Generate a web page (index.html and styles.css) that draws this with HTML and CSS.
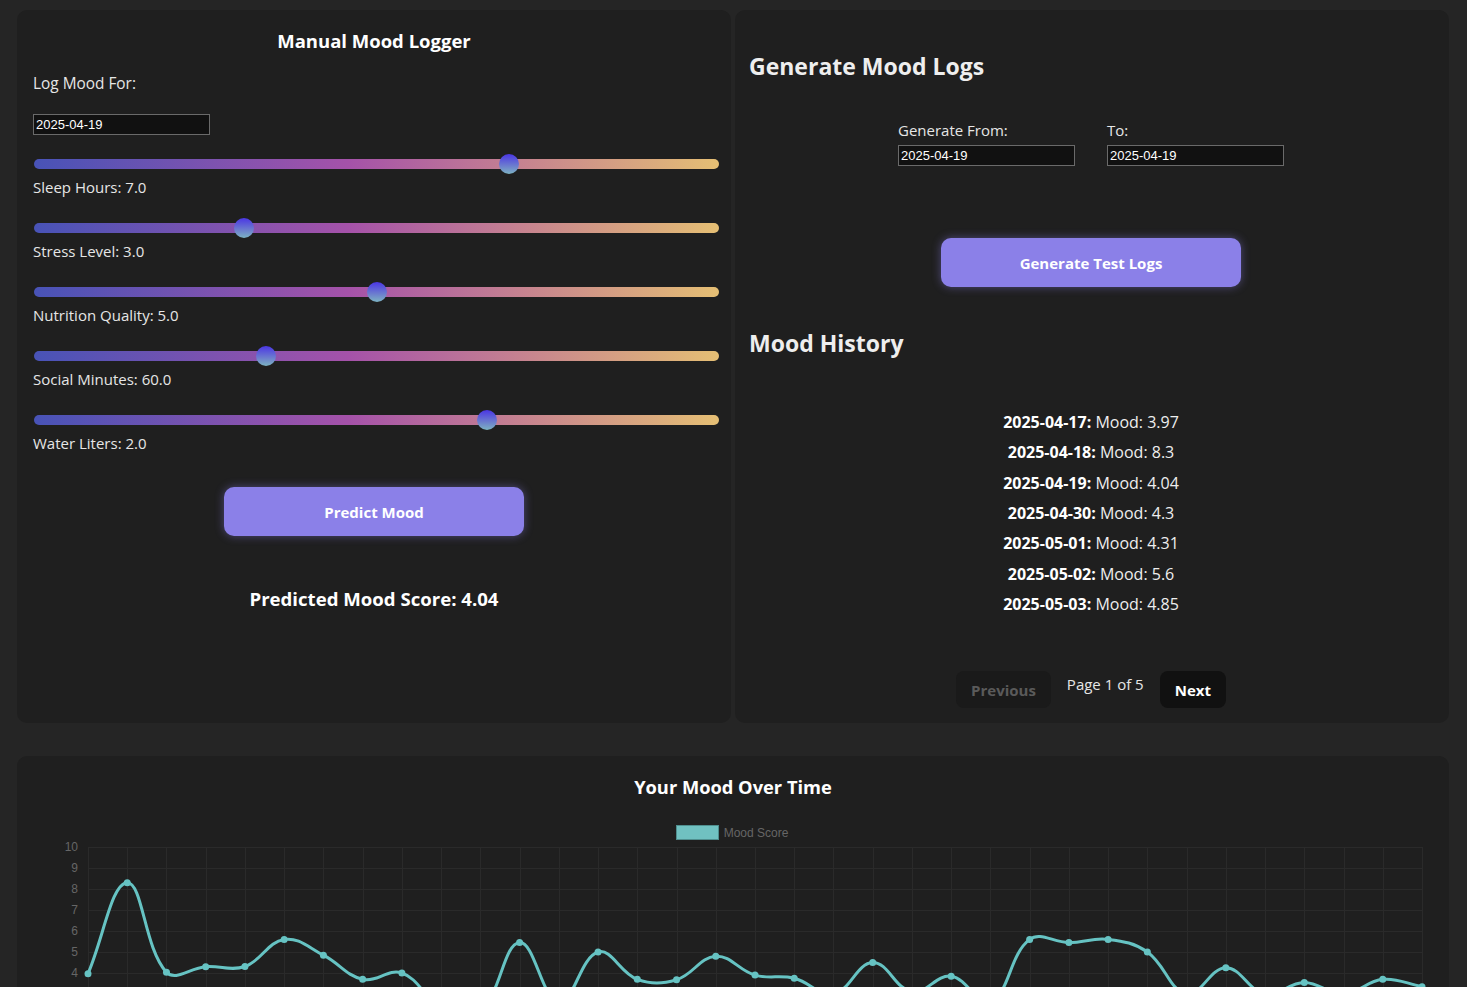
FILE: index.html
```html
<!DOCTYPE html>
<html lang="en">
<head>
<meta charset="utf-8">
<title>Mood Tracker</title>
<link rel="stylesheet" href="styles.css">
</head>
<body>
<div class="page">
  <div class="top-grid">
    <section class="card logger">
      <h3 class="card-title">Manual Mood Logger</h3>
      <label class="field-label">Log Mood For:</label>
      <input class="date-input" type="text" value="2025-04-19">
      <div class="sliders">
        <div class="slider-group">
          <input class="range" type="range" min="0" max="10" step="0.1" value="7">
          <div class="slider-label">Sleep Hours: 7.0</div>
        </div>
        <div class="slider-group">
          <input class="range" type="range" min="0" max="10" step="0.1" value="3">
          <div class="slider-label">Stress Level: 3.0</div>
        </div>
        <div class="slider-group">
          <input class="range" type="range" min="0" max="10" step="0.1" value="5">
          <div class="slider-label">Nutrition Quality: 5.0</div>
        </div>
        <div class="slider-group">
          <input class="range" type="range" min="0" max="180" step="1" value="60">
          <div class="slider-label">Social Minutes: 60.0</div>
        </div>
        <div class="slider-group">
          <input class="range" type="range" min="0" max="3" step="0.1" value="2">
          <div class="slider-label">Water Liters: 2.0</div>
        </div>
      </div>
      <div class="center-row">
        <button class="primary-btn predict-btn">Predict Mood</button>
      </div>
      <div class="predicted">Predicted Mood Score: 4.04</div>
    </section>

    <section class="card generator">
      <h2 class="section-title gen-title">Generate Mood Logs</h2>
      <div class="range-row">
        <div class="range-field">
          <label class="small-label">Generate From:</label>
          <input class="date-input" type="text" value="2025-04-19">
        </div>
        <div class="range-field">
          <label class="small-label">To:</label>
          <input class="date-input" type="text" value="2025-04-19">
        </div>
      </div>
      <div class="center-row">
        <button class="primary-btn generate-btn">Generate Test Logs</button>
      </div>
      <h2 class="section-title history-title">Mood History</h2>
      <ul class="history">
        <li><strong>2025-04-17:</strong> Mood: 3.97</li>
        <li><strong>2025-04-18:</strong> Mood: 8.3</li>
        <li><strong>2025-04-19:</strong> Mood: 4.04</li>
        <li><strong>2025-04-30:</strong> Mood: 4.3</li>
        <li><strong>2025-05-01:</strong> Mood: 4.31</li>
        <li><strong>2025-05-02:</strong> Mood: 5.6</li>
        <li><strong>2025-05-03:</strong> Mood: 4.85</li>
      </ul>
      <div class="pager">
        <button class="pager-btn disabled">Previous</button>
        <span class="pager-text">Page 1 of 5</span>
        <button class="pager-btn active">Next</button>
      </div>
    </section>
  </div>

  <section class="card chart-card">
    <h3 class="chart-title">Your Mood Over Time</h3>
    <div class="legend">
      <span class="legend-box"></span>
      <span class="legend-text">Mood Score</span>
    </div>
    <svg id="chart" class="chart-svg" width="1432" height="250" viewBox="0 0 1432 250"></svg>
  </section>
</div>
<script src="chart.js"></script>
</body>
</html>
```

FILE: styles.css
```css
* { box-sizing: border-box; }

html, body {
  margin: 0;
  padding: 0;
  background: #252525;
  color: #e6e6e6;
  font-family: "Open Sans", "Noto Sans", sans-serif;
}

.page {
  padding: 10px 18px 0 17px;
}

.top-grid {
  display: grid;
  grid-template-columns: minmax(0, 1fr) minmax(0, 1fr);
  gap: 4px;
}

.card {
  background: #1f1f1f;
  border-radius: 10px;
}

/* ---------- left card ---------- */
.logger {
  padding: 16px 16px 20px 16px;
  display: flex;
  flex-direction: column;
  min-width: 0;
}

.card-title {
  margin: 2px 0 0;
  text-align: center;
  font-size: 18.5px;
  line-height: 26px;
  font-weight: 700;
  color: #ffffff;
}

.field-label {
  display: block;
  margin-top: 19px;
  font-size: 15.4px;
  line-height: 21px;
  color: #e6e6e6;
}

.date-input {
  display: block;
  width: 177px;
  height: 21px;
  margin: 0;
  padding: 0 2px;
  background: #111111;
  border: 1px solid #6a6a6a;
  color: #ffffff;
  font-family: "Liberation Sans", Arial, sans-serif;
  font-size: 13px;
  outline: none;
}

.logger .date-input {
  margin-top: 20px;
}

.sliders {
  display: flex;
  flex-direction: column;
  gap: 19px;
  margin-top: 18px;
}

.slider-group {
  display: flex;
  flex-direction: column;
  gap: 3px;
}

.range {
  -webkit-appearance: none;
  appearance: none;
  display: block;
  width: calc(100% + 3px);
  height: 10px;
  margin: 6px 0 4px 1px;
  border-radius: 5px;
  background: linear-gradient(90deg, #4853b7 0%, #a552a9 46%, #c7848f 72%, #e5bf74 100%);
  outline: none;
}

.range::-webkit-slider-thumb {
  -webkit-appearance: none;
  appearance: none;
  width: 20px;
  height: 20px;
  border-radius: 50%;
  background: linear-gradient(180deg, #4a36e4 0%, #6a78d0 55%, #7cb3c2 100%);
  border: none;
  cursor: pointer;
}

.slider-label {
  font-size: 15px;
  line-height: 22px;
  color: #e6e6e6;
}

.center-row {
  display: flex;
  justify-content: center;
}

.primary-btn {
  width: 300px;
  height: 49px;
  border: none;
  border-radius: 10px;
  background: #8b80e8;
  color: #ffffff;
  font-family: "Open Sans", "Noto Sans", sans-serif;
  font-size: 15px;
  font-weight: 700;
  box-shadow: 0 0 10px rgba(139, 128, 232, 0.45);
  cursor: pointer;
}

.predict-btn {
  margin-top: 33px;
}

.predicted {
  margin-top: 51px;
  text-align: center;
  font-size: 18.6px;
  line-height: 24px;
  font-weight: 700;
  color: #ffffff;
}

/* ---------- right card ---------- */
.generator {
  padding: 0 16px 15px 14px;
  display: flex;
  flex-direction: column;
  min-width: 0;
}

.section-title {
  margin: 0;
  font-size: 23px;
  line-height: 32px;
  font-weight: 700;
  color: #eeeeee;
}

.gen-title { margin-top: 40px; }

.range-row {
  display: flex;
  justify-content: center;
  gap: 32px;
  margin-top: 38px;
}

.range-field {
  display: flex;
  flex-direction: column;
  gap: 5px;
}

.small-label {
  font-size: 15px;
  line-height: 20px;
  color: #e6e6e6;
}

.generate-btn {
  margin-top: 72px;
}

.history-title { margin-top: 40px; }

.history {
  list-style: none;
  margin: 48px 0 0;
  padding: 0;
  text-align: center;
  font-size: 16px;
  line-height: 30.33px;
  color: #eeeeee;
}

.history strong {
  font-weight: 700;
  color: #ffffff;
}

.pager {
  display: flex;
  justify-content: center;
  align-items: flex-start;
  gap: 16px;
  margin-top: 52px;
}

.pager-btn {
  height: 37px;
  padding: 0 15px;
  border: none;
  border-radius: 8px;
  font-family: "Open Sans", "Noto Sans", sans-serif;
  font-size: 15px;
  font-weight: 700;
}

.pager-btn.disabled {
  background: #1a1a1a;
  color: #5a5a5a;
}

.pager-btn.active {
  background: #111111;
  color: #ffffff;
}

.pager-text {
  padding-top: 2px;
  font-size: 15px;
  line-height: 22px;
  color: #e6e6e6;
}

/* ---------- chart card ---------- */
.chart-card {
  margin-top: 33px;
  padding-top: 19px;
  height: 300px;
  overflow: hidden;
}

.chart-title {
  margin: 0;
  text-align: center;
  font-size: 18.3px;
  line-height: 24px;
  font-weight: 700;
  color: #ffffff;
}

.legend {
  display: flex;
  justify-content: center;
  align-items: center;
  gap: 5px;
  margin-top: 26px;
  height: 15px;
  padding-right: 2px;
}

.legend-box {
  width: 43px;
  height: 15px;
  background: #70c1c1;
  border: 1px solid #4f8e8e;
}

.legend-text {
  font-family: "Liberation Sans", Arial, sans-serif;
  font-size: 12px;
  color: #666666;
}

.chart-svg {
  display: block;
  margin-top: -4px;
}

.grid-line {
  stroke: #2a2a2a;
  stroke-width: 1;
}

.axis-label {
  font-family: "Liberation Sans", Arial, sans-serif;
  font-size: 12px;
  fill: #666666;
}

.mood-line {
  fill: none;
  stroke: #66c3c3;
  stroke-width: 3;
}

.mood-point {
  fill: #66c3c3;
}
```

FILE: chart.js
```javascript
(function () {
  var svg = document.getElementById('chart');
  var NS = 'http://www.w3.org/2000/svg';
  var data = [3.97, 8.3, 4.04, 4.3, 4.31, 5.6, 4.85, 3.7, 4.0, 2.4, 2.2, 5.45, 2.6, 5.0, 3.7, 3.68,
    4.8, 3.9, 3.75, 3.0, 4.5, 3.1, 3.85, 2.6, 5.6, 5.45, 5.6, 5.0, 3.0, 4.25, 3.0, 3.55, 3.0, 3.7, 3.35];
  var left = 71, right = 1405, top = 11, unit = 21;
  var step = (right - left) / (data.length - 1);

  function el(name, attrs) {
    var e = document.createElementNS(NS, name);
    for (var k in attrs) e.setAttribute(k, attrs[k]);
    svg.appendChild(e);
    return e;
  }
  function yOf(v) { return top + (10 - v) * unit; }

  for (var v = 0; v <= 10; v++) {
    el('line', { x1: left, x2: right, y1: yOf(v) + 0.5, y2: yOf(v) + 0.5, 'class': 'grid-line' });
    if (v >= 4) {
      var t = el('text', { x: left - 10, y: yOf(v) + 4, 'text-anchor': 'end', 'class': 'axis-label' });
      t.textContent = String(v);
    }
  }
  for (var i = 0; i < data.length; i++) {
    var x = Math.round(left + i * step) + 0.5;
    el('line', { x1: x, x2: x, y1: top, y2: yOf(0), 'class': 'grid-line' });
  }

  // points + spline (Chart.js style, tension 0.4)
  var pts = data.map(function (d, i) { return { x: left + i * step, y: yOf(d) }; });
  var tension = 0.4;
  var cps = pts.map(function (p, i) {
    var p0 = pts[i - 1] || p, p2 = pts[i + 1] || p;
    var d01 = Math.hypot(p.x - p0.x, p.y - p0.y);
    var d12 = Math.hypot(p2.x - p.x, p2.y - p.y);
    var s01 = d01 / (d01 + d12 || 1), s12 = d12 / (d01 + d12 || 1);
    var fa = tension * s01, fb = tension * s12;
    return {
      px: p.x - fa * (p2.x - p0.x), py: p.y - fa * (p2.y - p0.y),
      nx: p.x + fb * (p2.x - p0.x), ny: p.y + fb * (p2.y - p0.y)
    };
  });
  var d = 'M' + pts[0].x.toFixed(2) + ' ' + pts[0].y.toFixed(2);
  for (var j = 1; j < pts.length; j++) {
    d += ' C' + cps[j - 1].nx.toFixed(2) + ' ' + cps[j - 1].ny.toFixed(2) + ' ' +
      cps[j].px.toFixed(2) + ' ' + cps[j].py.toFixed(2) + ' ' +
      pts[j].x.toFixed(2) + ' ' + pts[j].y.toFixed(2);
  }
  el('path', { d: d, 'class': 'mood-line' });
  pts.forEach(function (p) {
    el('circle', { cx: p.x, cy: p.y, r: 3.5, 'class': 'mood-point' });
  });
})();
```
